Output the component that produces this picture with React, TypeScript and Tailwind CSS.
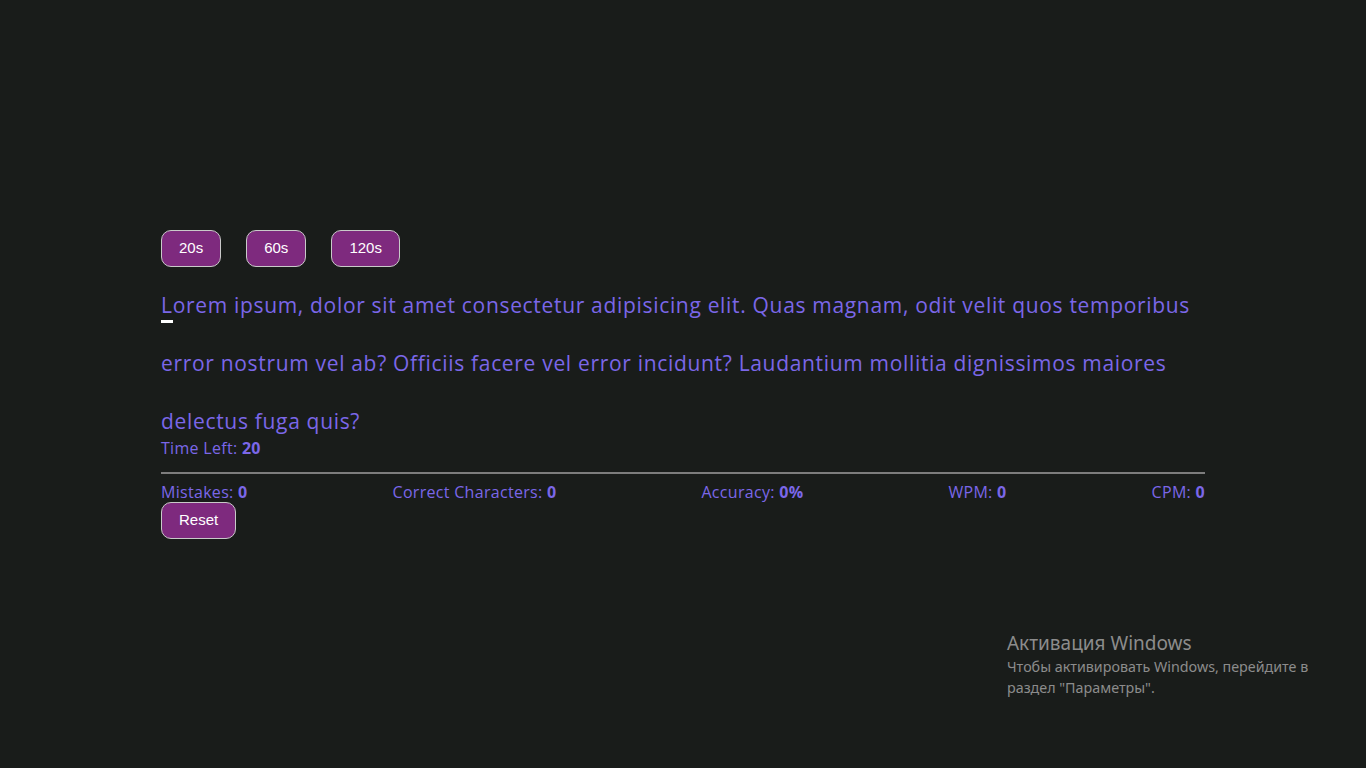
const text =
  "Lorem ipsum, dolor sit amet consectetur adipisicing elit. Quas magnam, odit velit quos temporibus error nostrum vel ab? Officiis facere vel error incidunt? Laudantium mollitia dignissimos maiores delectus fuga quis?";

const times = ["20s", "60s", "120s"];

const stats = [
  { label: "Mistakes:", value: "0" },
  { label: "Correct Characters:", value: "0" },
  { label: "Accuracy:", value: "0%" },
  { label: "WPM:", value: "0" },
  { label: "CPM:", value: "0" },
];

export default function App() {
  return (
    <div className="relative min-h-screen bg-[#191c1a] flex items-center justify-center font-['Open_Sans',sans-serif]">
      <div className="w-[1044px] flex flex-col">
        {/* TIME BUTTONS */}
        <div className="flex gap-[25px]">
          {times.map((t) => (
            <button
              key={t}
              className="h-[37px] px-[17px] rounded-[10px] bg-[#7e2a7e] border border-[#c9c9c9] text-white text-[15px] font-['Liberation_Sans',sans-serif]"
            >
              {t}
            </button>
          ))}
        </div>

        {/* TYPING TEXT */}
        <p className="mt-[9px] text-[21px] leading-[58px] text-[#7b67e8] tracking-[0.68px]">
          <span className="border-b-[3px] border-white pb-[1px]">L</span>
          {text.slice(1)}
        </p>

        <div className="-mt-[12px] text-[16px] leading-[20px] text-[#7b67e8] tracking-[0.3px]">
          Time Left: <span className="font-bold">20</span>
        </div>

        {/* DIVIDER */}
        <div className="mt-[14px] h-[2px] bg-[#7d7d7d]"></div>

        {/* STATS */}
        <div className="mt-[8px] flex justify-between text-[16px] leading-[20px] text-[#7b67e8] tracking-[0.3px]">
          {stats.map((s) => (
            <div key={s.label}>
              {s.label} <span className="font-bold">{s.value}</span>
            </div>
          ))}
        </div>

        <div>
          <button className="h-[37px] px-[17px] rounded-[10px] bg-[#7e2a7e] border border-[#c9c9c9] text-white text-[15px] font-['Liberation_Sans',sans-serif]">
            Reset
          </button>
        </div>
      </div>

      {/* WINDOWS WATERMARK */}
      <div className="absolute left-[1007px] top-[630px] text-[#8c8c8c] font-['Noto_Sans',sans-serif]">
        <div className="text-[19px] leading-[26px]">Активация Windows</div>
        <div className="text-[14.3px] leading-[21px]">
          Чтобы активировать Windows, перейдите в
          <br />
          раздел "Параметры".
        </div>
      </div>
    </div>
  );
}
